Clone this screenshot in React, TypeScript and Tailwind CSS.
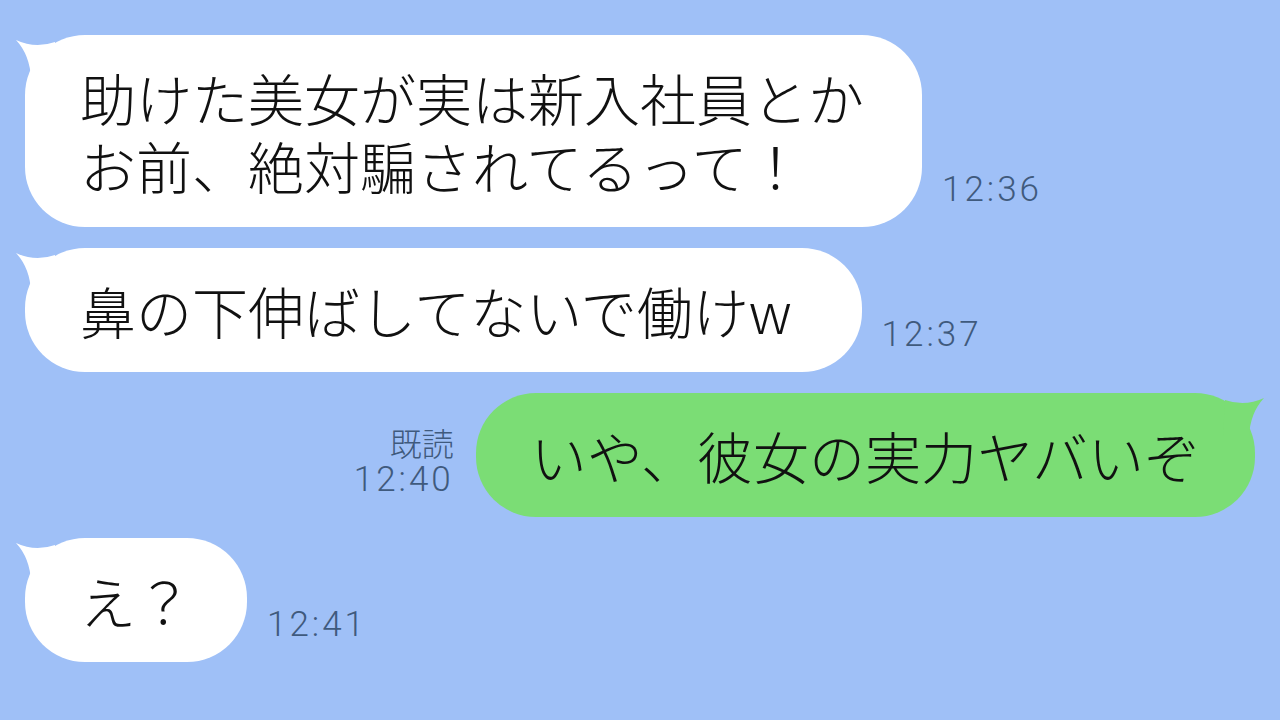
const jp = { fontFamily: '"Noto Sans CJK JP", "Noto Sans", sans-serif' };

const Tail = ({ fill, right }: { fill: string; right?: boolean }) => (
  <svg
    width="50"
    height="50"
    viewBox="0 0 50 50"
    className={right ? "absolute -right-[12px] top-0 -scale-x-100" : "absolute -left-[12px] top-0"}
  >
    <path d="M3 5 Q22 14 42 7 L44 44 L18 44 Q17 20 3 5 Z" fill={fill} />
  </svg>
);

const Time = ({ t }: { t: string }) => (
  <span
    className="ml-5 mb-[20px] text-[35px] font-light leading-none tracking-[3px] text-[#3f5a7d]"
    style={{ fontFamily: "Roboto, sans-serif" }}
  >
    {t}
  </span>
);

const App = () => {
  return (
    <div className="w-[1280px] h-[720px] overflow-hidden bg-[#9fc0f7] pt-[35px]" style={jp}>
      <div className="flex flex-col gap-[21px]">
        {/* 12:36 */}
        <div className="flex items-end pl-[25px]">
          <div className="relative rounded-[60px] bg-white pl-[55px] pr-[58px] py-[28px] text-[56px] font-light leading-[68px] text-[#111]">
            <Tail fill="#ffffff" />
            <span className="relative">
              助けた美女が実は新入社員とか
              <br />
              お前、絶対騙されてるって！
            </span>
          </div>
          <Time t="12:36" />
        </div>

        {/* 12:37 */}
        <div className="flex items-end pl-[25px]">
          <div className="relative rounded-[60px] bg-white pl-[55px] pr-[70px] py-[28px] text-[56px] font-light leading-[68px] text-[#111]">
            <Tail fill="#ffffff" />
            <span className="relative">鼻の下伸ばしてないで働けw</span>
          </div>
          <Time t="12:37" />
        </div>

        {/* mine */}
        <div className="flex items-end justify-end pr-[25px]">
          <div className="mr-[22px] mb-[20px] flex flex-col items-end text-[#3f5a7d]">
            <span className="text-[32px] font-light leading-[40px]">既読</span>
            <span
              className="text-[35px] font-light leading-none tracking-[3px]"
              style={{ fontFamily: "Roboto, sans-serif" }}
            >
              12:40
            </span>
          </div>
          <div className="relative rounded-[60px] bg-[#7bdd75] pl-[55px] pr-[55px] py-[28px] text-[56px] font-light leading-[68px] text-[#111]">
            <Tail fill="#7bdd75" right />
            <span className="relative">いや、彼女の実力ヤバいぞ</span>
          </div>
        </div>

        {/* 12:41 */}
        <div className="flex items-end pl-[25px]">
          <div className="relative rounded-[60px] bg-white pl-[55px] pr-[55px] py-[28px] text-[56px] font-light leading-[68px] text-[#111]">
            <Tail fill="#ffffff" />
            <span className="relative">え？</span>
          </div>
          <Time t="12:41" />
        </div>
      </div>
    </div>
  );
};

export default App;
